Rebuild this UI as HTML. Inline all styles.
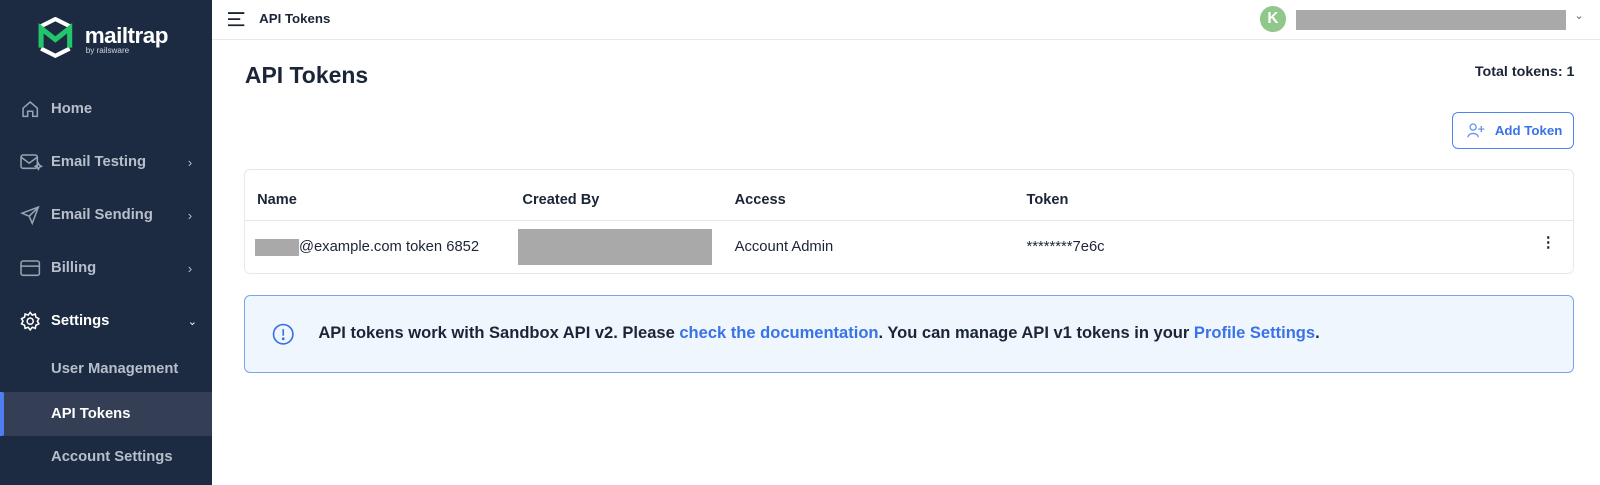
<!DOCTYPE html>
<html><head><meta charset="utf-8"><style>
*{box-sizing:border-box;margin:0;padding:0}
html,body{width:1600px;height:485px;overflow:hidden;background:#fff}
body{font-family:"Liberation Sans",sans-serif;color:#1b2537}
.w{position:relative;width:1568px;height:475px;zoom:1.0204}
.sb{position:absolute;left:0;top:0;width:208px;height:475px;background:#1c2b42}
.item{position:absolute;left:0;width:208px;height:42px;display:flex;align-items:center;color:#b7bfcb;font-size:14.5px;font-weight:bold}
.item svg{position:absolute;left:20px}
.item span{position:absolute;left:50px}
.item .ch{position:absolute;left:184px;font-size:13px;font-weight:normal}
.top{position:absolute;left:208px;top:0;right:0;height:39px;border-bottom:1px solid #e6e8eb}
.table{position:absolute;left:239px;top:166px;width:1304px;height:103px;border:1px solid #e6e8eb;border-radius:6px}
.th{position:absolute;top:21px;font-size:14.3px;font-weight:bold}
.td{position:absolute;top:67px;font-size:14.5px}
</style></head><body><div class="w">
<div class="sb">
 <svg style="position:absolute;left:36px;top:17px" width="36" height="40" viewBox="0 0 36 40"><path d="M4 9 L18 2 L32 9" stroke="#fff" stroke-width="4" fill="none"/><path d="M4 31 L18 38 L32 31" stroke="#fff" stroke-width="4" fill="none"/><path d="M4 30 V11 L18 22 L32 11 V30" stroke="#23c46a" stroke-width="5" fill="none"/></svg>
 <div style="position:absolute;left:83px;top:23px;color:#fff;font-size:22px;font-weight:bold;letter-spacing:-0.5px">mailtrap</div>
 <div style="position:absolute;left:84px;top:45px;color:#cfd5dd;font-size:8px">by railsware</div>
 <div class="item" style="top:86px"><svg width="20" height="20" viewBox="0 0 20 20" fill="none" stroke="#9aa3b0" stroke-width="1.5"><path d="M3 9 L10 3 L17 9 V17 H12.5 V12 H7.5 V17 H3 Z"/></svg><span>Home</span></div>
 <div class="item" style="top:138px"><svg width="22" height="18" viewBox="0 0 22 18" fill="none" stroke="#9aa3b0" stroke-width="1.5"><rect x="1" y="2" width="16" height="13" rx="2"/><path d="M1 4 L9 10 L17 4"/><path d="M18 10 l1 2 2 1-2 1-1 2-1-2-2-1 2-1z"/></svg><span>Email Testing</span><b class="ch">›</b></div>
 <div class="item" style="top:190px"><svg width="20" height="20" viewBox="0 0 20 20" fill="none" stroke="#9aa3b0" stroke-width="1.5"><path d="M2 8 L18 2 L12 18 L9 11 Z M9 11 L18 2"/></svg><span>Email Sending</span><b class="ch">›</b></div>
 <div class="item" style="top:242px"><svg width="20" height="18" viewBox="0 0 20 18" fill="none" stroke="#9aa3b0" stroke-width="1.5"><rect x="1" y="2" width="18" height="14" rx="2"/><path d="M1 7 H19"/></svg><span>Billing</span><b class="ch">›</b></div>
 <div class="item" style="top:294px;color:#fff"><svg width="20" height="20" viewBox="0 0 20 20" fill="none" stroke="#fff" stroke-width="1.5"><circle cx="10" cy="10" r="3"/><path d="M10 1.5 L12 4 L15 3 L15.5 6 L18.5 7.5 L17 10 L18.5 12.5 L15.5 14 L15 17 L12 16 L10 18.5 L8 16 L5 17 L4.5 14 L1.5 12.5 L3 10 L1.5 7.5 L4.5 6 L5 3 L8 4 Z"/></svg><span>Settings</span><b class="ch" style="font-size:11px">⌄</b></div>
 <div class="item" style="top:341px"><span>User Management</span></div>
 <div class="item" style="top:384px;height:43px;background:#343f56;color:#fff"><div style="position:absolute;left:0;top:0;width:4px;height:43px;background:#4f7ef0;border-radius:0 2px 2px 0"></div><span>API Tokens</span></div>
 <div class="item" style="top:427px"><span>Account Settings</span></div>
</div>
<div class="top">
 <svg style="position:absolute;left:15px;top:12px" width="17" height="14" viewBox="0 0 17 14" stroke="#1b2537" stroke-width="1.8"><path d="M0 1H16M0 7H12M0 13H16"/></svg>
 <div style="position:absolute;left:46px;top:11px;font-size:13px;font-weight:bold">API Tokens</div>
 <div style="position:absolute;left:1027px;top:6px;width:25px;height:25px;border-radius:50%;background:#8fc88a;color:#fff;font-weight:bold;font-size:15px;text-align:center;line-height:25px">K</div>
 <div style="position:absolute;left:1062px;top:10px;width:265px;height:19px;background:#a9a9a9"></div>
 <div style="position:absolute;left:1335px;top:9px;font-size:11px;color:#666">⌄</div>
</div>
<div style="position:absolute;left:240px;top:61px;font-size:22.5px;font-weight:bold">API Tokens</div>
<div style="position:absolute;right:25px;top:63px;font-size:14px;font-weight:bold">Total tokens: 1</div>
<div style="position:absolute;left:1423px;top:110px;width:120px;height:36px;border:1px solid #4f84ef;border-radius:6px;color:#3a72e8;font-size:13px;font-weight:bold">
 <svg style="position:absolute;left:14px;top:10px" width="18" height="15" viewBox="0 0 18 15" fill="none" stroke="#6b93ee" stroke-width="1.3"><circle cx="6" cy="4" r="3"/><path d="M1 14 C1 9 11 9 11 14"/><path d="M14 3 V9 M11 6 H17"/></svg>
 <span style="position:absolute;left:41px;top:10px">Add Token</span></div>
<div class="table">
 <div style="position:absolute;left:0;right:0;top:49px;border-top:1px solid #e6e8eb"></div>
 <div class="th" style="left:12px">Name</div><div class="th" style="left:272px">Created By</div><div class="th" style="left:480px">Access</div><div class="th" style="left:766px">Token</div>
 <div style="position:absolute;left:10px;top:67px;width:43px;height:17px;background:#a9a9a9"></div>
 <div class="td" style="left:53px">@example.com token 6852</div>
 <div style="position:absolute;left:268px;top:57px;width:190px;height:36px;background:#a9a9a9"></div>
 <div class="td" style="left:480px">Account Admin</div>
 <div class="td" style="left:766px">********7e6c</div>
 <div class="td" style="left:1270px;font-weight:bold;top:62px">⋮</div>
</div>
<div style="position:absolute;left:239px;top:289px;width:1304px;height:77px;border:1px solid #7ea3ee;border-radius:6px;background:#eff6fe">
 <svg style="position:absolute;left:27px;top:27px" width="22" height="22" viewBox="0 0 22 22" fill="none" stroke="#3a72e8" stroke-width="1.6"><circle cx="11" cy="11" r="9.5"/><path d="M11 6V12.5"/><circle cx="11" cy="15.5" r="0.6" fill="#3a72e8"/></svg>
 <div style="position:absolute;left:72px;top:27px;font-size:16.2px;font-weight:bold">API tokens work with Sandbox API v2. Please <span style="color:#3a72e8">check the documentation</span>. You can manage API v1 tokens in your <span style="color:#3a72e8">Profile Settings</span>.</div>
</div>
</div></body></html>
